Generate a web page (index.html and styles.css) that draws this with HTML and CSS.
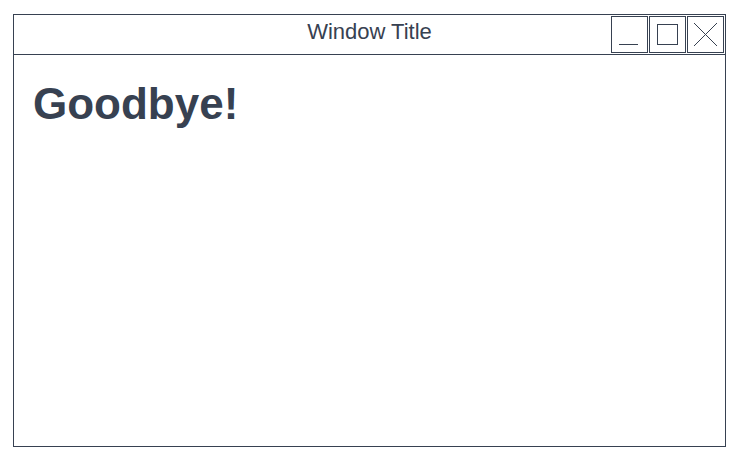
FILE: index.html
```html
<!DOCTYPE html>
<html lang="en">
<head>
<meta charset="utf-8">
<title>Window</title>
<link rel="stylesheet" href="styles.css">
</head>
<body>
<div class="desktop">
  <div class="window">
    <div class="titlebar">
      <div class="spacer"></div>
      <div class="title">Window Title</div>
      <div class="controls">
        <button class="ctrl" aria-label="Minimize">
          <svg viewBox="0 0 35 35" width="35" height="35"><line x1="7" y1="27.5" x2="26" y2="27.5"/></svg>
        </button>
        <button class="ctrl" aria-label="Maximize">
          <svg viewBox="0 0 35 35" width="35" height="35"><rect x="7.5" y="7.5" width="20" height="20"/></svg>
        </button>
        <button class="ctrl" aria-label="Close">
          <svg viewBox="0 0 35 35" width="35" height="35"><line x1="6" y1="6" x2="29" y2="29"/><line x1="29" y1="6" x2="6" y2="29"/></svg>
        </button>
      </div>
    </div>
    <div class="content">
      <h1 class="heading">Goodbye!</h1>
    </div>
  </div>
</div>
</body>
</html>
```
FILE: styles.css
```css
html, body {
  margin: 0;
  padding: 0;
  background: #ffffff;
}

body {
  font-family: "Liberation Sans", Arial, sans-serif;
  color: #374151;
}

.desktop {
  padding: 14px 0 0 13px;
}

.window {
  box-sizing: border-box;
  width: 713px;
  height: 433px;
  border: 1px solid #374151;
  display: flex;
  flex-direction: column;
  background: #ffffff;
}

.titlebar {
  height: 39px;
  border-bottom: 1px solid #374151;
  display: grid;
  grid-template-columns: 1fr auto 1fr;
  align-items: center;
}

.title {
  font-size: 22px;
  line-height: 24px;
  padding-bottom: 6px;
  white-space: nowrap;
}

.controls {
  justify-self: end;
  display: flex;
  gap: 1px;
  padding-right: 1px;
}

.ctrl {
  box-sizing: border-box;
  width: 37px;
  height: 37px;
  padding: 0;
  margin: 0;
  border: 1px solid #374151;
  background: #ffffff;
  display: flex;
  align-items: center;
  justify-content: center;
}

.ctrl svg {
  display: block;
  fill: none;
  stroke: #374151;
  stroke-width: 1;
}

.content {
  flex: 1;
  padding: 24px 19px;
}

.heading {
  margin: 0;
  font-size: 44px;
  font-weight: bold;
  line-height: 50px;
}
```
